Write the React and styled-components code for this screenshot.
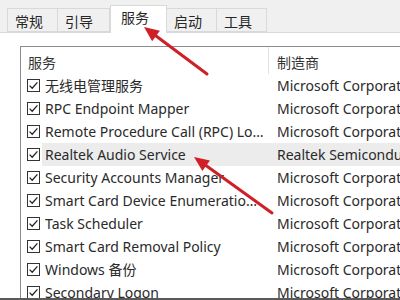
import React from "react";
import styled, { createGlobalStyle } from "styled-components";

const Global = createGlobalStyle`
  html, body { margin: 0; padding: 0; background: #ffffff; }
  body { font-family: "Noto Sans", "Noto Sans CJK SC", sans-serif; }
`;

const Frame = styled.div`
  position: relative;
  width: 400px;
  height: 300px;
  overflow: hidden;
  display: flex;
  flex-direction: column;
  background: #ffffff;
  color: #2a2a2a;
  font-family: "Noto Sans", "Noto Sans CJK SC", sans-serif;
  font-size: 14px;
`;

const TabStrip = styled.div`
  height: 33px;
  flex: none;
  display: flex;
  align-items: flex-end;
  padding-left: 7px;
  background: #f0f0f0;
  border-bottom: 1px solid #d9d9d9;
  box-sizing: border-box;
`;

const Tab = styled.div`
  box-sizing: border-box;
  height: ${(p) => (p.$active ? "28px" : "24px")};
  width: ${(p) => p.$w}px;
  margin-bottom: ${(p) => (p.$active ? "-1px" : "0")};
  display: flex;
  align-items: center;
  padding-left: ${(p) => (p.$active ? "10px" : "7px")};
  background: ${(p) => (p.$active ? "#ffffff" : "#f0f0f0")};
  border: 1px solid #d9d9d9;
  border-bottom: ${(p) => (p.$active ? "none" : "1px solid #d9d9d9")};
  border-left: ${(p) => (p.$first || p.$active ? "1px solid #d9d9d9" : "none")};
  font-family: "Noto Sans CJK SC", sans-serif;
  font-size: 14px;
  color: #262626;
  padding-top: ${(p) => (p.$active ? "0" : "2px")};
  ${(p) => (p.$active ? "padding-bottom: 6px;" : "")}
`;

const Panel = styled.div`
  flex: 1;
  min-height: 0;
  padding: 13px 0 0 20px;
  overflow: hidden;
`;

const ListBox = styled.div`
  border-top: 1px solid #8c8c8c;
  border-left: 1px solid #8c8c8c;
  height: 100%;
  box-sizing: border-box;
`;

const HeaderRow = styled.div`
  display: grid;
  grid-template-columns: 247px 1fr;
  height: 27px;
  align-items: stretch;
`;

const HeadCell = styled.div`
  display: flex;
  align-items: center;
  padding-left: ${(p) => p.$pad}px;
  border-left: ${(p) => (p.$divider ? "1px solid #e3e3e3" : "none")};
  font-family: "Noto Sans CJK SC", sans-serif;
  font-size: 14px;
  color: #333;
  padding-top: 2px;
`;

const Row = styled.div`
  display: grid;
  grid-template-columns: 18px 223px 1fr;
  height: 23px;
  align-items: center;
  padding-left: 6px;
  background: ${(p) =>
    p.$hl ? "linear-gradient(to right, transparent 21px, #ececec 21px)" : "transparent"};
`;

const Check = styled.svg`
  width: 13px;
  height: 13px;
  display: block;
`;

const Cell = styled.div`
  white-space: nowrap;
  overflow: hidden;
  text-overflow: ${(p) => (p.$ellipsis ? "ellipsis" : "clip")};
  padding-left: ${(p) => p.$pad || 0}px;
  padding-right: ${(p) => p.$padR || 0}px;
  font-family: "Noto Sans", "Noto Sans CJK SC", sans-serif;
  font-size: 14px;
  line-height: 23px;
  color: #2a2a2a;
`;

const BottomEdge = styled.div`
  flex: none;
  height: 2px;
  background: #5a5a5a;
`;

const Overlay = styled.svg`
  position: absolute;
  left: 0;
  top: 0;
  width: 400px;
  height: 300px;
  pointer-events: none;
`;

const rows = [
  ["无线电管理服务", "Microsoft Corporation"],
  ["RPC Endpoint Mapper", "Microsoft Corporation"],
  ["Remote Procedure Call (RPC) Locator", "Microsoft Corporation"],
  ["Realtek Audio Service", "Realtek Semiconductor", true],
  ["Security Accounts Manager", "Microsoft Corporation"],
  ["Smart Card Device Enumeration Service", "Microsoft Corporation"],
  ["Task Scheduler", "Microsoft Corporation"],
  ["Smart Card Removal Policy", "Microsoft Corporation"],
  ["Windows 备份", "Microsoft Corporation"],
  ["Secondary Logon", "Microsoft Corporation"],
];

const CheckBox = () => (
  <Check viewBox="0 0 13 13">
    <rect x="0.5" y="0.5" width="12" height="12" fill="#fff" stroke="#333" />
    <path d="M2.6 6.6 L5.2 9.2 L10.4 3.4" fill="none" stroke="#222" strokeWidth="1.3" />
  </Check>
);

const Arrow = ({ x1, y1, x2, y2 }) => {
  const dx = x2 - x1;
  const dy = y2 - y1;
  const len = Math.hypot(dx, dy);
  const ux = dx / len;
  const uy = dy / len;
  const hl = 15;
  const hw = 6.5;
  const bx = x2 - ux * hl;
  const by = y2 - uy * hl;
  const px = -uy * hw;
  const py = ux * hw;
  return (
    <g fill="#cf2027" stroke="#cf2027">
      <line x1={x1} y1={y1} x2={bx + ux * 2} y2={by + uy * 2} strokeWidth="3" strokeLinecap="round" />
      <polygon
        points={`${x2},${y2} ${bx + px},${by + py} ${bx - px},${by - py}`}
        stroke="none"
      />
    </g>
  );
};

export default function App() {
  return (
    <>
      <Global />
      <Frame>
        <TabStrip>
          <Tab $w={51} $first>常规</Tab>
          <Tab $w={52}>引导</Tab>
          <Tab $w={57} $active>服务</Tab>
          <Tab $w={50}>启动</Tab>
          <Tab $w={50}>工具</Tab>
        </TabStrip>
        <Panel>
          <ListBox>
            <HeaderRow>
              <HeadCell $pad={7}>服务</HeadCell>
              <HeadCell $pad={8} $divider>制造商</HeadCell>
            </HeaderRow>
            {rows.map(([name, maker, hl]) => (
              <Row key={name} $hl={hl}>
                <CheckBox />
                <Cell $ellipsis $padR={4}>{name}</Cell>
                <Cell $pad={9}>{maker}</Cell>
              </Row>
            ))}
          </ListBox>
        </Panel>
        <BottomEdge />
        <Overlay viewBox="0 0 400 300">
          <Arrow x1={207} y1={74} x2={144} y2={27} />
          <Arrow x1={272} y1={213} x2={194} y2={157} />
        </Overlay>
      </Frame>
    </>
  );
}
